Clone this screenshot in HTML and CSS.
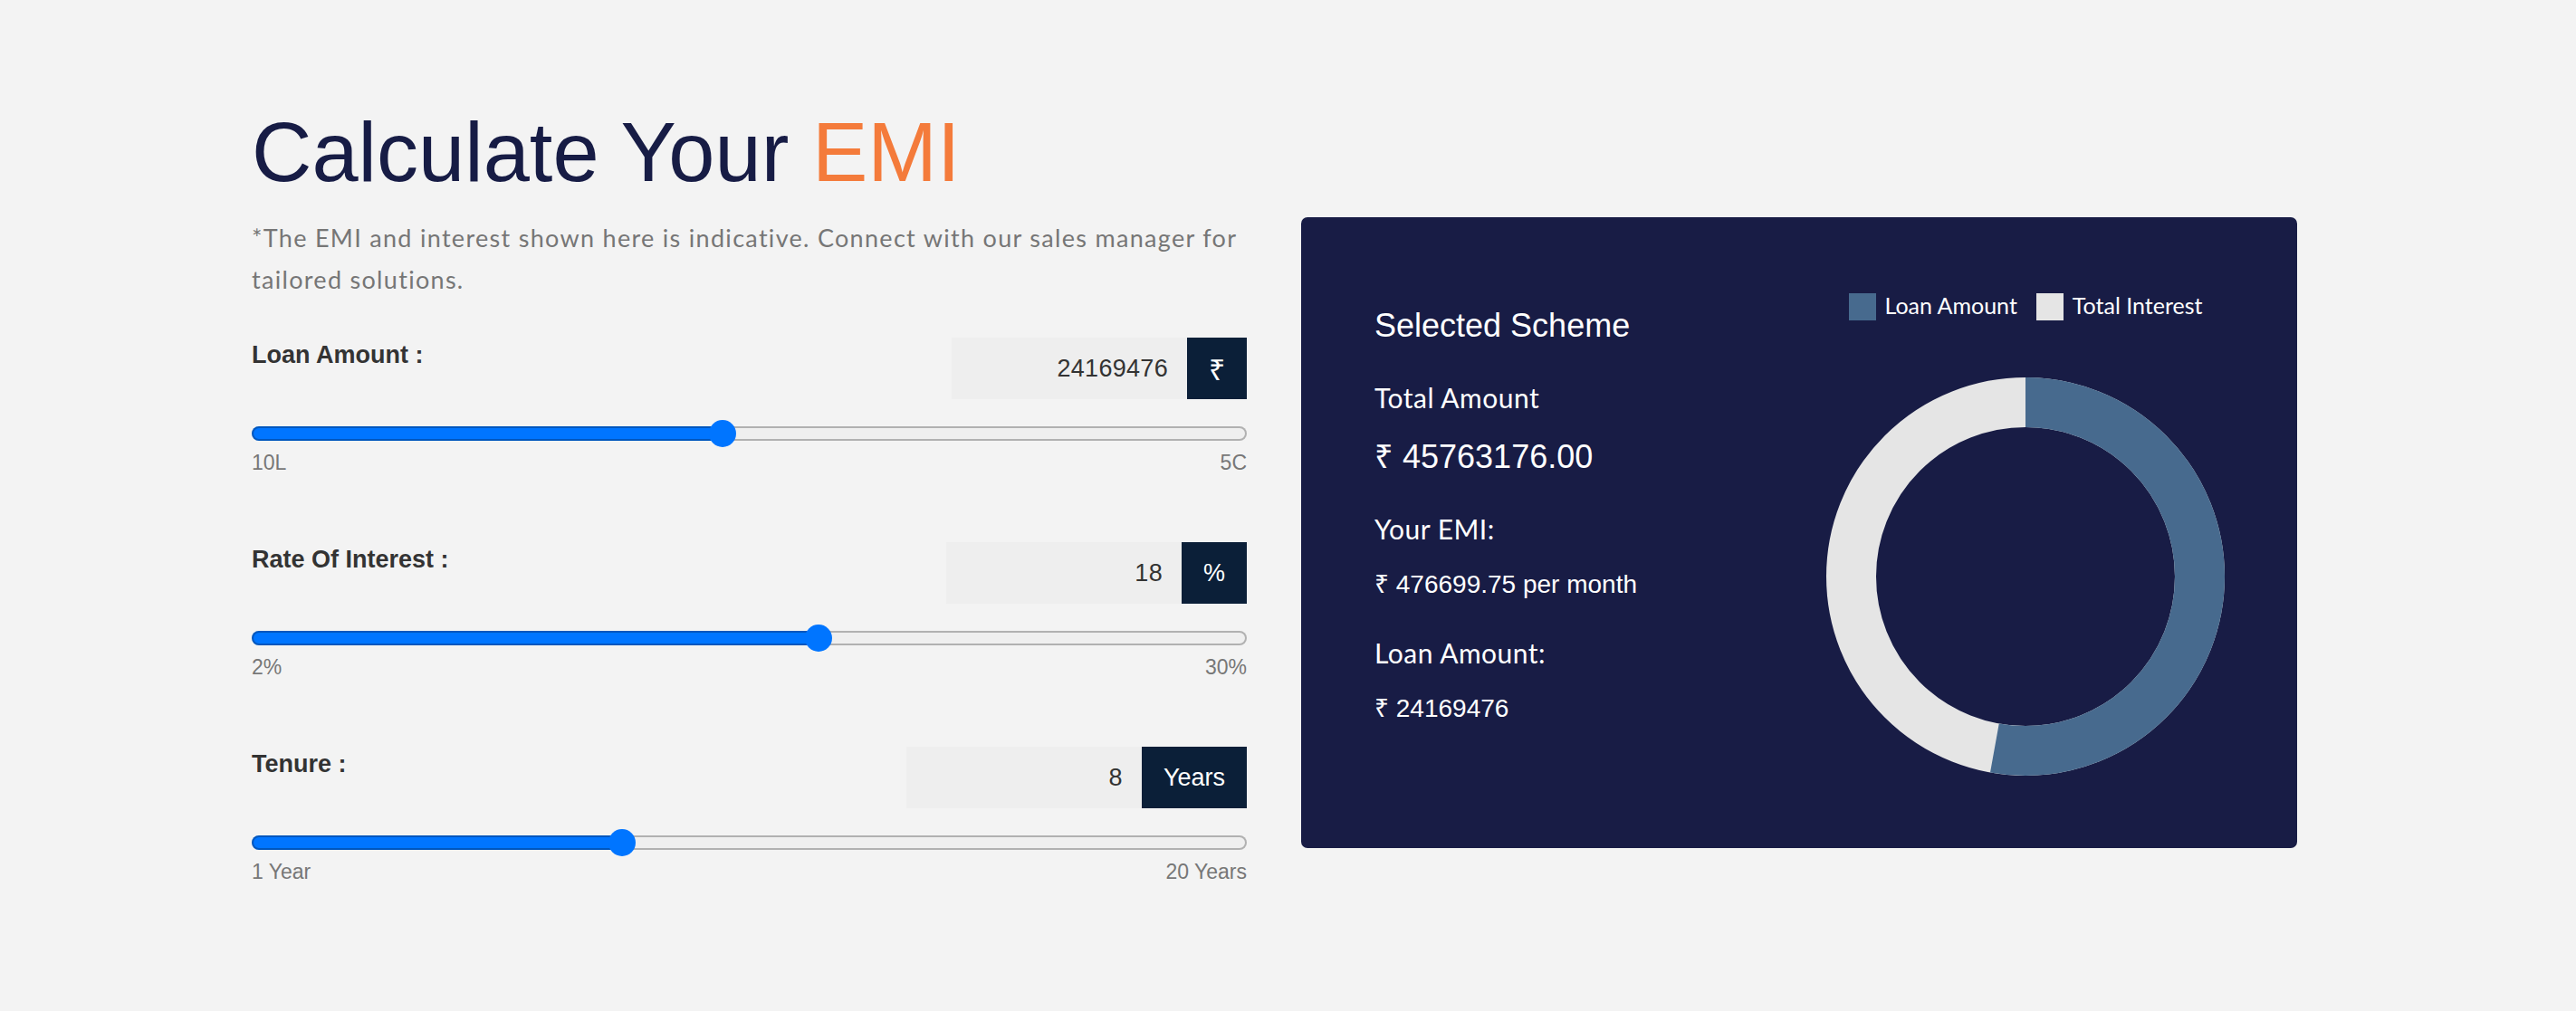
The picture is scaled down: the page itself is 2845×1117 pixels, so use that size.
FILE: index.html
```html
<!DOCTYPE html>
<html lang="en">
<head>
<meta charset="utf-8">
<title>EMI Calculator</title>
<link rel="stylesheet" href="styles.css">
</head>
<body>
<main class="emi">
  <h1 class="emi-title">Calculate Your <span class="accent">EMI</span></h1>
  <div class="emi-grid">
    <section class="calc">
      <p class="note">*The EMI and interest shown here is indicative. Connect with our sales manager for tailored solutions.</p>

      <div class="field">
        <div class="field-head">
          <label class="field-label" for="loan">Loan Amount :</label>
          <div class="input-group">
            <input class="num" id="loan" type="text" value="24169476">
            <span class="unit unit-rupee">₹</span>
          </div>
        </div>
        <input class="range" type="range" min="1000000" max="50000000" step="1" value="24169476" style="--p:0.47285">
        <div class="range-labels"><span>10L</span><span>5C</span></div>
      </div>

      <div class="field">
        <div class="field-head">
          <label class="field-label" for="rate">Rate Of Interest :</label>
          <div class="input-group">
            <input class="num" id="rate" type="text" value="18">
            <span class="unit">%</span>
          </div>
        </div>
        <input class="range" type="range" min="2" max="30" step="0.1" value="18" style="--p:0.57143">
        <div class="range-labels"><span>2%</span><span>30%</span></div>
      </div>

      <div class="field">
        <div class="field-head">
          <label class="field-label" for="tenure">Tenure :</label>
          <div class="input-group">
            <input class="num" id="tenure" type="text" value="8">
            <span class="unit">Years</span>
          </div>
        </div>
        <input class="range" type="range" min="1" max="20" step="1" value="8" style="--p:0.36842">
        <div class="range-labels"><span>1 Year</span><span>20 Years</span></div>
      </div>
    </section>

    <section class="card">
      <div class="summary">
        <h2 class="scheme-title">Selected Scheme</h2>
        <div class="sum-label">Total Amount</div>
        <div class="sum-value big">₹ 45763176.00</div>
        <div class="sum-label">Your EMI:</div>
        <div class="sum-value">₹ 476699.75 per month</div>
        <div class="sum-label">Loan Amount:</div>
        <div class="sum-value">₹ 24169476</div>
      </div>
      <div class="chart">
        <ul class="legend">
          <li class="legend-item"><span class="swatch swatch-loan"></span>Loan Amount</li>
          <li class="legend-item"><span class="swatch swatch-interest"></span>Total Interest</li>
        </ul>
        <svg class="donut" viewBox="0 0 440 440" aria-hidden="true">
          <circle cx="220" cy="220" r="192.5" fill="none" stroke="#e5e5e5" stroke-width="55"/>
          <circle cx="220" cy="220" r="192.5" fill="none" stroke="#476a8e" stroke-width="55"
                  stroke-dasharray="638.8 2000" transform="rotate(-90 220 220)"/>
        </svg>
      </div>
    </section>
  </div>
</main>
</body>
</html>
```

FILE: styles.css
```css
* { box-sizing: border-box; }

html, body {
  margin: 0;
  background: #f3f3f3;
}

.emi {
  max-width: 2289px;
  margin: 0 auto;
  padding: 122px 30px 0 0;
  font-family: "Liberation Sans", Arial, sans-serif;
}

.emi-title {
  margin: 0 0 26px;
  font-size: 92px;
  line-height: 92px;
  font-weight: 400;
  color: #171c45;
}

.accent { color: #f47b3b; }

.emi-grid {
  display: grid;
  grid-template-columns: 1099px 1100px;
  column-gap: 60px;
  align-items: start;
}

/* ---------- calculator column ---------- */
.note {
  margin: 0;
  font-family: Lato, "Open Sans", sans-serif;
  font-size: 27px;
  letter-spacing: 1.3px;
  line-height: 46px;
  color: #767676;
}

.field { margin-top: 75px; }
.note + .field { margin-top: 41px; }

.field-head {
  display: flex;
  justify-content: space-between;
  align-items: flex-start;
}

.field-label {
  margin-top: 4px;
  font-size: 27px;
  line-height: 31px;
  font-weight: 700;
  color: #333;
}

.input-group {
  display: flex;
  height: 68px;
}

.num {
  width: 260px;
  height: 68px;
  padding: 0 21px;
  border: 0;
  outline: none;
  background: #eeeeee;
  text-align: right;
  font-family: "Liberation Sans", Arial, sans-serif;
  font-size: 27px;
  letter-spacing: 0.3px;
  color: #333;
}

.unit {
  display: flex;
  align-items: center;
  justify-content: center;
  padding: 0 24px;
  background: #0b1f38;
  color: #fff;
  font-size: 27px;
}

.unit-rupee {
  width: 66px;
  padding: 0;
  font-size: 32px;
}

.range {
  -webkit-appearance: none;
  appearance: none;
  display: block;
  width: 100%;
  height: 30px;
  margin: 23px 0 0;
  padding: 0;
  background: transparent;
}

.range::-webkit-slider-runnable-track {
  height: 16px;
  border-radius: 8px;
  background: linear-gradient(to right, #0075ff calc(15px + (100% - 30px) * var(--p)), #efefef 0);
  box-shadow: inset 0 0 0 2px rgba(0, 0, 0, 0.26);
}

.range::-webkit-slider-thumb {
  -webkit-appearance: none;
  appearance: none;
  width: 30px;
  height: 30px;
  margin-top: -7px;
  border: 0;
  border-radius: 50%;
  background: #0075ff;
}

.range-labels {
  display: flex;
  justify-content: space-between;
  margin-top: 4px;
  font-size: 23px;
  line-height: 26px;
  color: #777;
}

/* ---------- summary card ---------- */
.card {
  display: grid;
  grid-template-columns: 500px 600px;
  background: #181c45;
  border-radius: 7px;
  color: #fff;
}

.summary { padding: 100px 0 0 81px; }

.scheme-title {
  margin: 0;
  font-size: 36px;
  line-height: 40px;
  font-weight: 400;
}

.sum-label {
  margin-top: 41px;
  font-family: Lato, "Open Sans", sans-serif;
  font-size: 30px;
  letter-spacing: 0.5px;
  line-height: 36px;
}

.sum-value {
  margin-top: 28px;
  font-size: 28px;
  line-height: 32px;
}

.sum-value.big {
  font-size: 36px;
  line-height: 40px;
}

.chart {
  display: flex;
  flex-direction: column;
  align-items: center;
  padding: 84px 0 80px;
}

.legend {
  display: flex;
  gap: 21px;
  height: 30px;
  margin: 0;
  padding: 0;
  list-style: none;
}

.legend-item {
  display: flex;
  align-items: center;
  gap: 10px;
  font-family: Lato, "Open Sans", sans-serif;
  font-size: 25px;
  line-height: 26px;
  padding-bottom: 4px;
}

.swatch {
  width: 30px;
  height: 30px;
  margin-bottom: -4px;
}

.swatch-loan { background: #476a8e; }
.swatch-interest { background: #e5e5e5; }

.donut {
  display: block;
  width: 440px;
  height: 440px;
  margin-top: 63px;
}
```
